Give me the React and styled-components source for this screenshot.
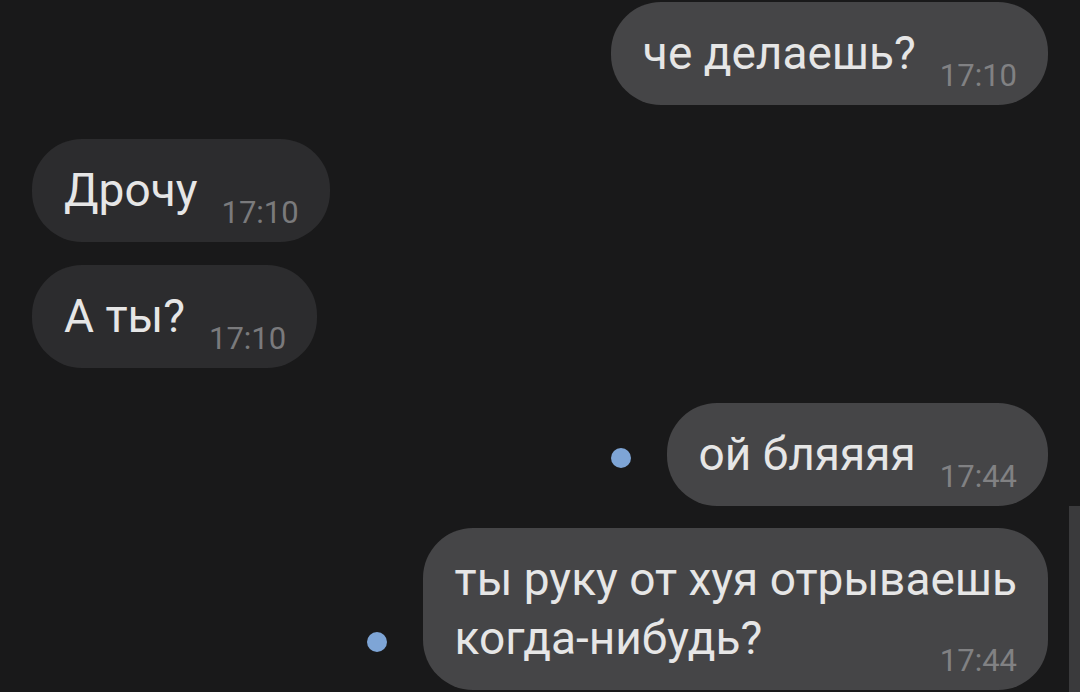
import styled, { createGlobalStyle } from "styled-components";

const GlobalStyle = createGlobalStyle`
  html, body {
    margin: 0;
    padding: 0;
    background: #19191a;
  }
  body {
    font-family: Roboto, "Noto Sans", "Liberation Sans", sans-serif;
  }
`;

const messages = [
  { id: 1, out: true, lines: ["че делаешь?"], time: "17:10", gap: 2 },
  { id: 2, out: false, lines: ["Дрочу"], time: "17:10", gap: 34 },
  { id: 3, out: false, lines: ["А ты?"], time: "17:10", gap: 23 },
  { id: 4, out: true, lines: ["ой бляяяя"], time: "17:44", gap: 35, unread: true },
  {
    id: 5,
    out: true,
    lines: ["ты руку от хуя отрываешь", "когда-нибудь?"],
    time: "17:44",
    gap: 22,
    unread: true,
  },
];

function App() {
  return (
    <Screen>
      <GlobalStyle />
      <Feed>
        {messages.map((m) => {
          const head = m.lines.slice(0, -1);
          const last = m.lines[m.lines.length - 1];
          return (
            <Row key={m.id} $out={m.out} $gap={m.gap}>
              {m.unread && <UnreadDot />}
              <Bubble $out={m.out}>
                {head.map((line) => (
                  <Line key={line}>{line}</Line>
                ))}
                <Footer>
                  <Line>{last}</Line>
                  <Time $out={m.out}>{m.time}</Time>
                </Footer>
              </Bubble>
            </Row>
          );
        })}
      </Feed>
      <ScrollThumb />
    </Screen>
  );
}

export default App;

const Screen = styled.div`
  position: relative;
  width: 1080px;
  height: 692px;
  overflow: hidden;
  background: #19191a;
`;

const Feed = styled.div`
  display: flex;
  flex-direction: column;
  padding: 0 32px;
`;

const Row = styled.div`
  display: flex;
  align-items: flex-end;
  justify-content: ${(p) => (p.$out ? "flex-end" : "flex-start")};
  margin-top: ${(p) => p.$gap}px;
`;

const UnreadDot = styled.span`
  width: 20px;
  height: 20px;
  border-radius: 50%;
  background: #7ea5d6;
  margin: 0 36px 38px 0;
  flex-shrink: 0;
`;

const Bubble = styled.div`
  display: flex;
  flex-direction: column;
  padding: 22px 31px 22px 32px;
  border-radius: 50px;
  background: ${(p) => (p.$out ? "#454547" : "#2c2c2e")};
  color: #e6e6e6;
`;

const Line = styled.div`
  font-size: 46px;
  line-height: 59px;
  white-space: nowrap;
`;

const Footer = styled.div`
  display: flex;
  align-items: flex-end;
  justify-content: space-between;
  gap: 24px;
`;

const Time = styled.span`
  font-size: 31px;
  line-height: 31px;
  margin-bottom: -8px;
  color: ${(p) => (p.$out ? "#818183" : "#7a7a7c")};
`;

const ScrollThumb = styled.div`
  position: absolute;
  right: 0;
  top: 506px;
  bottom: 0;
  width: 11px;
  background: #3a3a3c;
`;
